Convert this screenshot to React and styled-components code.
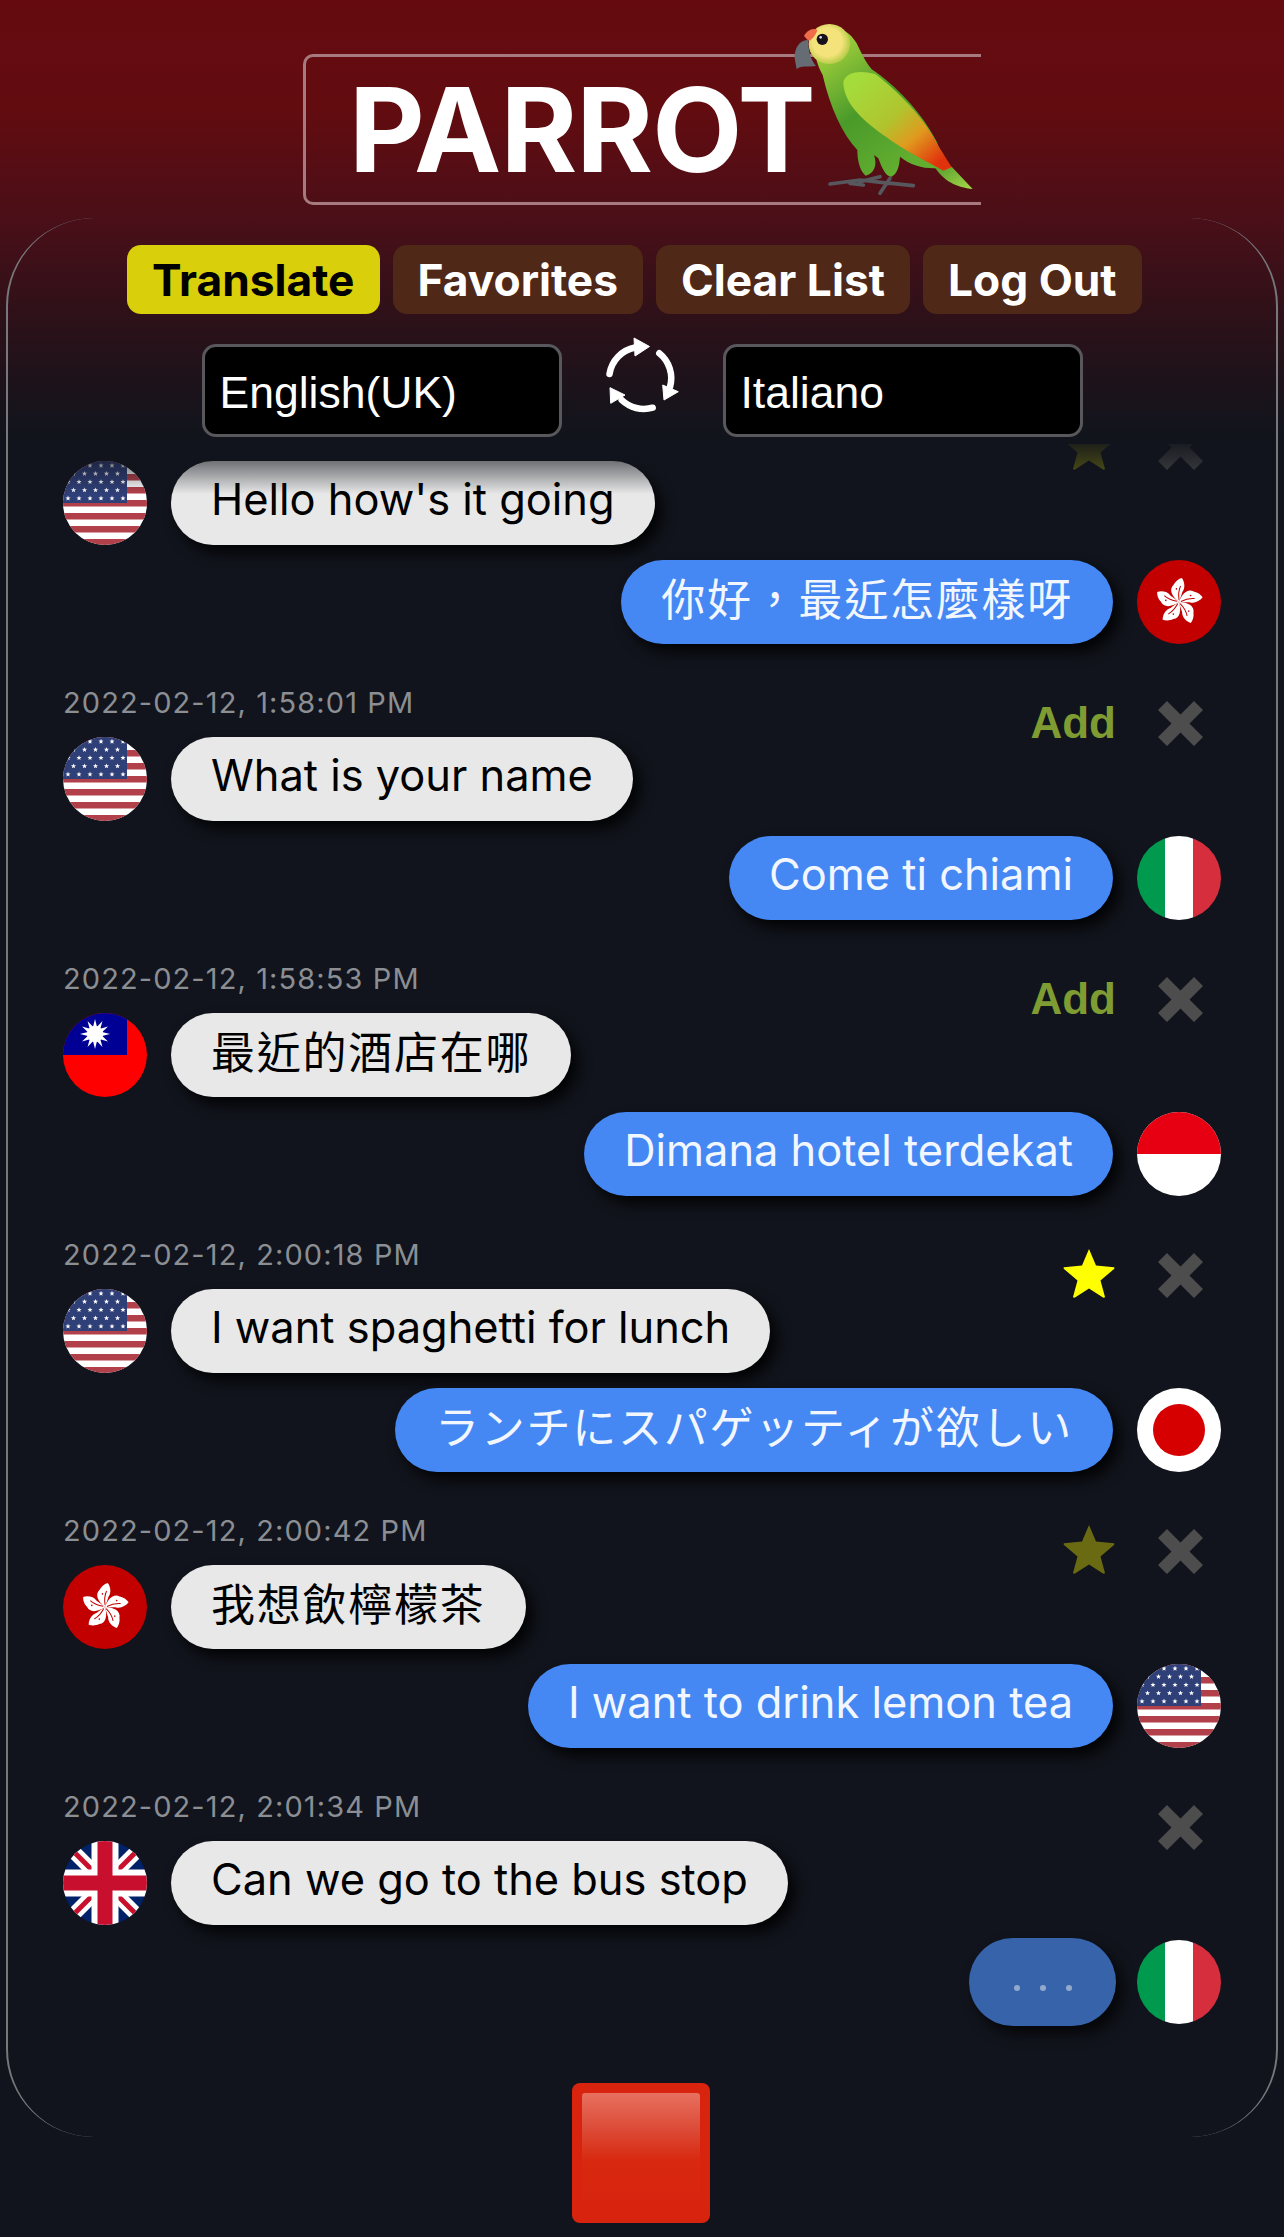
import React from 'react';
import styled, { createGlobalStyle } from 'styled-components';

const bg = `#11141c`;
const sans = `Inter, "Noto Sans CJK TC", sans-serif`;

const GlobalStyle = createGlobalStyle`
    html, body {
        margin: 0;
        padding: 0;
        background: ${bg};
    }
    * { box-sizing: border-box; }
`;

const Page = styled.div`
    width: 1284px;
    height: 2237px;
    overflow: hidden;
    padding-top: 54px;
    font-family: ${sans};
    background: linear-gradient(#650b10 0, #620c10 110px, #4a0f18 220px, #2a1119 330px, #13141c 425px, ${bg} 445px);
`;

const TitleBox = styled.div`
    position: relative;
    width: 678px;
    height: 151px;
    margin-left: 303px;
    padding-left: 43px;
    display: flex;
    align-items: center;
    border: 3px solid #a67a7e;
    border-right: none;
    border-radius: 10px 0 0 10px;
`;

const Title = styled.h1`
    margin: 0;
    font-size: 117px;
    font-weight: 700;
    line-height: 1;
    letter-spacing: -1px;
    color: #fff;
`;

const ParrotArt = styled.svg`
    position: absolute;
    left: 474px;
    top: -47px;
    width: 200px;
    height: 190px;
`;

const Panel = styled.main`
    width: 1272px;
    height: 1919px;
    margin: 13px 0 0 6px;
    display: flex;
    flex-direction: column;
    border-left: 2px solid #77777c;
    border-right: 2px solid #77777c;
    border-radius: 88px;
`;

const Tabs = styled.nav`
    display: flex;
    gap: 13px;
    padding: 27px 0 0 119px;
`;

const Tab = styled.button`
    height: 69px;
    padding: 0 25px;
    border: none;
    border-radius: 14px;
    font-family: ${sans};
    font-size: 44.3px;
    font-weight: 700;
    background: ${props => props.$active ? `#d9cf0a` : `#4f2817`};
    color: ${props => props.$active ? `#000` : `#fff`};
`;

const LangRow = styled.div`
    display: flex;
    justify-content: center;
    gap: 28px;
    margin-top: 30px;
    height: 93px;
`;

const LangSelect = styled.div`
    width: 360px;
    height: 93px;
    padding: 5px 0 0 15px;
    display: flex;
    align-items: center;
    background: #000;
    border: 3px solid #57575c;
    border-radius: 14px;
    font-family: "Liberation Sans", Arial, sans-serif;
    font-size: 44.5px;
    color: #fff;
`;

const SwapIcon = styled.svg`
    flex: none;
    width: 105px;
    height: 100px;
    margin-top: -19px;
`;

const List = styled.section`
    position: relative;
    flex: 1;
    overflow: hidden;
    margin-top: 7px;
    padding: 0 55px;
`;

const ListFade = styled.div`
    position: absolute;
    z-index: 2;
    left: 0;
    right: 0;
    top: 0;
    height: 50px;
    background: linear-gradient(rgba(17, 20, 28, 0.85), rgba(17, 20, 28, 0));
`;

const ListInner = styled.div`
    margin-top: -76px;
`;

const Group = styled.article`
    display: flex;
    flex-direction: column;
`;

const Meta = styled.div`
    height: 93px;
    display: flex;
    align-items: flex-end;
    justify-content: space-between;
`;

const Timestamp = styled.time`
    margin-bottom: 16px;
    font-size: 29px;
    line-height: 36px;
    letter-spacing: 1.1px;
    color: #8b8e93;
`;

const Actions = styled.div`
    position: relative;
    z-index: 1;
    display: flex;
    align-items: center;
    gap: 21px;
    height: 50px;
    margin-bottom: -11px;
    padding-right: 18px;
`;

const AddLabel = styled.span`
    margin-right: -1px;
    font-family: "Liberation Sans", Arial, sans-serif;
    font-size: 44px;
    font-weight: 700;
    color: #7f9c33;
`;

const StarIcon = styled.svg`
    width: 52px;
    height: 50px;
    margin-bottom: 5px;
    fill: ${props => props.$on ? `#ffff00` : `#6a6a12`};
`;

const CloseIcon = styled.svg`
    width: 45px;
    height: 45px;
    margin-left: 22px;
    fill: #4d4d4d;
`;

const Row = styled.div`
    display: flex;
    align-items: center;
    gap: 24px;
    justify-content: ${props => props.$right ? `flex-end` : `flex-start`};
    margin-top: ${props => props.$right ? `15px` : `0`};
`;

const Bubble = styled.div`
    height: 84px;
    padding: 0 40px;
    border-radius: 42px;
    font-size: ${props => props.$cjk ? `44px` : `43.4px`};
    line-height: ${props => props.$cjk ? `81px` : `77px`};
    letter-spacing: ${props => props.$cjk ? `1.76px` : `0`};
    white-space: nowrap;
    background: ${props => props.$right ? `#4587f3` : `#e8e8e8`};
    color: ${props => props.$right ? `#f2f7ff` : `#000`};
    box-shadow: 7px 8px 14px rgba(0, 0, 0, 0.85);
`;

const TypingBubble = styled.div`
    width: 147px;
    height: 88px;
    margin: -2px -3px -2px 0;
    padding-top: 11px;
    display: flex;
    align-items: center;
    justify-content: center;
    gap: 20px;
    border-radius: 44px;
    background: #3763ab;
    box-shadow: 7px 8px 14px rgba(0, 0, 0, 0.7);
`;

const TypingDot = styled.span`
    width: 6px;
    height: 6px;
    border-radius: 50%;
    background: #93a9cc;
`;

const FlagFrame = styled.svg`
    flex: none;
    width: 84px;
    height: 84px;
    border-radius: 50%;
`;

const StopButton = styled.div`
    width: 138px;
    height: 140px;
    margin: -54px 0 0 572px;
    padding: 10px 10px 12px;
    border-radius: 8px;
    background: #d8240f;
`;

const StopGloss = styled.div`
    height: 100%;
    border-radius: 3px;
    background: linear-gradient(#e8705f, #dc4c38 30%, #d8280f 58%, #d8240f);
`;

const starPoints = (cx, cy, r) => {
    const pts = [];
    for (let i = 0; i < 10; i++) {
        const rad = i % 2 === 0 ? r : r * 0.42;
        const a = (Math.PI / 5) * i;
        pts.push(`${(cx + rad * Math.sin(a)).toFixed(2)},${(cy - rad * Math.cos(a)).toFixed(2)}`);
    }
    return pts.join(' ');
};

const USFlag = () => {
    const stars = [];
    for (let r = 0; r < 5; r++) {
        const n = r % 2 === 0 ? 6 : 5;
        for (let c = 0; c < n; c++) {
            stars.push(starPoints((r % 2 === 0 ? 5 : 10.5) + c * 11, 4.5 + r * 8.2, 2.7));
        }
    }
    return (
        <FlagFrame viewBox="0 0 84 84">
            <rect width="84" height="84" fill="#fff" />
            {[0, 13, 26, 39, 52, 65, 78].map(y => <rect key={y} y={y} width="84" height="6.5" fill="#b2404a" />)}
            <rect width="64" height="42" fill="#2f3f78" />
            {stars.map((p, i) => <polygon key={i} points={p} fill="#fff" />)}
        </FlagFrame>
    );
};

const HKFlag = () => (
    <FlagFrame viewBox="0 0 84 84">
        <rect width="84" height="84" fill="#c20000" />
        {[0, 1, 2, 3, 4].map(i => (
            <g key={i} transform={`rotate(${2 + i * 72} 42 42)`}>
                <path d="M42 42C35 37 31 30 36 25C38 21 41 19 44 18C47 22 48 28 45 32C44 36 43 39 42 42Z" fill="#fff" />
                <path d="M42 40C41 35 41 31 43 26" stroke="#c20000" strokeWidth="1" fill="none" />
                <circle cx="39" cy="29" r="0.8" fill="#c20000" />
            </g>
        ))}
    </FlagFrame>
);

const ITFlag = () => (
    <FlagFrame viewBox="0 0 84 84">
        <rect width="28" height="84" fill="#009a4e" />
        <rect x="28" width="28" height="84" fill="#fff" />
        <rect x="56" width="28" height="84" fill="#d62e3c" />
    </FlagFrame>
);

const IDFlag = () => (
    <FlagFrame viewBox="0 0 84 84">
        <rect width="84" height="84" fill="#fff" />
        <rect width="84" height="42" fill="#e70011" />
    </FlagFrame>
);

const JPFlag = () => (
    <FlagFrame viewBox="0 0 84 84">
        <rect width="84" height="84" fill="#fff" />
        <circle cx="42" cy="42" r="26" fill="#d60000" />
    </FlagFrame>
);

const TWFlag = () => (
    <FlagFrame viewBox="0 0 84 84">
        <rect width="84" height="84" fill="#fe0000" />
        <rect width="64" height="42" fill="#000095" />
        {Array.from({ length: 12 }, (_, i) => (
            <polygon key={i} points="32,6 34,14 30,14" fill="#fff" transform={`rotate(${i * 30} 32 21)`} />
        ))}
        <circle cx="32" cy="21" r="8" fill="#fff" />
    </FlagFrame>
);

const UKFlag = () => (
    <FlagFrame viewBox="0 0 84 84">
        <rect width="84" height="84" fill="#012169" />
        <path d="M0 0L84 84M84 0L0 84" stroke="#fff" strokeWidth="14" />
        <path d="M0 0L84 84M84 0L0 84" stroke="#c8102e" strokeWidth="5" />
        <path d="M42 0V84M0 42H84" stroke="#fff" strokeWidth="27" />
        <path d="M42 0V84M0 42H84" stroke="#c8102e" strokeWidth="15" />
    </FlagFrame>
);

const flags = { us: USFlag, hk: HKFlag, it: ITFlag, id: IDFlag, jp: JPFlag, tw: TWFlag, uk: UKFlag };

const Flag = ({ code }) => {
    const Comp = flags[code];
    return <Comp />;
};

const Star = ({ on }) => (
    <StarIcon $on={on} viewBox="0 0 52 50">
        <path d="M26 1L33 17.500L51 19.200Q52 20 51 21L37.500 32.500L42 49Q41.500 50 40 49.500L26 40.500L12 49.500Q10.500 50 10 49L14.500 32.500L1 21Q0 20 1 19.200L19 17.500Z" />
    </StarIcon>
);

const Close = () => (
    <CloseIcon viewBox="0 0 45 45">
        <path d="M9 0L22.500 13.500L36 0L45 9L31.500 22.500L45 36L36 45L22.500 31.500L9 45L0 36L13.500 22.500L0 9Z" />
    </CloseIcon>
);

const Parrot = () => (
    <ParrotArt viewBox="0 0 600 570">
        <defs>
            <linearGradient id="parrotBody" x1="0.2" y1="0.1" x2="0.7" y2="0.9">
                <stop offset="0" stopColor="#9ccc3a" />
                <stop offset="0.5" stopColor="#4a9a2a" />
                <stop offset="1" stopColor="#62ae30" />
            </linearGradient>
            <linearGradient id="parrotWing" x1="0.1" y1="0.1" x2="0.9" y2="0.9">
                <stop offset="0" stopColor="#a4dc3c" />
                <stop offset="0.45" stopColor="#b0c42e" />
                <stop offset="0.7" stopColor="#e09a1e" />
                <stop offset="1" stopColor="#e0320c" />
            </linearGradient>
            <radialGradient id="parrotHead" cx="0.45" cy="0.45" r="0.6">
                <stop offset="0.6" stopColor="#f4e27a" />
                <stop offset="1" stopColor="#a8c83e" />
            </radialGradient>
            <linearGradient id="parrotTail" x1="0" y1="0" x2="1" y2="1">
                <stop offset="0" stopColor="#4f9a2c" />
                <stop offset="1" stopColor="#a8d848" />
            </linearGradient>
        </defs>
        <path d="M150 522L240 510L330 520M240 515L300 500M250 525L210 520M330 505L300 550M335 520L400 527" stroke="#56585e" strokeWidth="11" strokeLinecap="round" fill="none" />
        <path d="M460 465L515 470L578 537C530 532 490 515 460 465Z" fill="url(#parrotTail)" />
        <path d="M110 70C150 35 205 55 230 100C245 130 255 155 275 178C345 225 420 300 470 395L500 470C460 480 400 475 360 440C358 470 352 490 335 500C315 500 305 470 295 445L282 435C292 462 285 490 257 497C237 480 232 445 232 420C185 370 150 290 128 195C115 170 95 130 110 70Z" fill="url(#parrotBody)" />
        <path d="M190 215C200 185 240 180 285 192C350 240 430 320 470 400L515 472L490 482C440 455 370 420 320 382C260 340 190 285 190 215Z" fill="url(#parrotWing)" />
        <ellipse cx="148" cy="102" rx="62" ry="60" fill="url(#parrotHead)" />
        <path d="M72 78C80 62 98 52 112 60C108 75 95 92 85 92Z" fill="#ee6c4a" />
        <path d="M85 90C60 88 42 115 44 145L50 178C60 165 85 172 108 168C92 150 84 120 85 90Z" fill="#666c74" />
        <circle cx="127" cy="88" r="17" fill="#15101c" />
        <circle cx="122" cy="82" r="4" fill="#d8d8e0" />
    </ParrotArt>
);

const Swap = () => (
    <SwapIcon viewBox="0 0 105 100">
        <g fill="none" stroke="#fff" strokeWidth="6.5" strokeLinecap="round">
            <path d="M19.500 49A32 32 0 0 1 45 22.500" />
            <path d="M69.300 28.300A32 32 0 0 1 80 62" />
            <path d="M62.700 82.700A32 32 0 0 1 31.700 75" />
        </g>
        <g fill="#fff" stroke="#fff" strokeWidth="1" strokeLinejoin="round">
            <polygon points="44,13 59.500,21.500 45,31" />
            <polygon points="72.700,60 88.300,66.700 74,75" />
            <polygon points="20,62.700 35,70 20.700,78.300" />
        </g>
    </SwapIcon>
);

const messages = [
    { time: '', action: null, from: 'us', text: `Hello how's it going`, to: 'hk', reply: '你好，最近怎麼樣呀' },
    { time: '2022-02-12, 1:58:01 PM', action: 'add', from: 'us', text: 'What is your name', to: 'it', reply: 'Come ti chiami' },
    { time: '2022-02-12, 1:58:53 PM', action: 'add', from: 'tw', text: '最近的酒店在哪', to: 'id', reply: 'Dimana hotel terdekat' },
    { time: '2022-02-12, 2:00:18 PM', action: 'on', from: 'us', text: 'I want spaghetti for lunch', to: 'jp', reply: 'ランチにスパゲッティが欲しい' },
    { time: '2022-02-12, 2:00:42 PM', action: 'off', from: 'hk', text: '我想飲檸檬茶', to: 'us', reply: 'I want to drink lemon tea' },
    { time: '2022-02-12, 2:01:34 PM', action: null, from: 'uk', text: 'Can we go to the bus stop', to: 'it', reply: null },
];

const isCjk = (text) => /[^\x00-\x7f]/.test(text);

const App = () => (
    <Page>
        <GlobalStyle />
        <TitleBox>
            <Title>PARROT</Title>
            <Parrot />
        </TitleBox>
        <Panel>
            <Tabs>
                <Tab $active>Translate</Tab>
                <Tab>Favorites</Tab>
                <Tab>Clear List</Tab>
                <Tab>Log Out</Tab>
            </Tabs>
            <LangRow>
                <LangSelect>English(UK)</LangSelect>
                <Swap />
                <LangSelect>Italiano</LangSelect>
            </LangRow>
            <List>
                <ListFade />
                <ListInner>
                    {messages.map((m, i) => (
                        <Group key={i}>
                            <Meta>
                                <Timestamp>{m.time}</Timestamp>
                                <Actions>
                                    {m.action === 'add' && <AddLabel>Add</AddLabel>}
                                    {m.action === 'on' && <Star on />}
                                    {(m.action === 'off' || i === 0) && <Star />}
                                    <Close />
                                </Actions>
                            </Meta>
                            <Row>
                                <Flag code={m.from} />
                                <Bubble $cjk={isCjk(m.text)}>{m.text}</Bubble>
                            </Row>
                            <Row $right>
                                {m.reply
                                    ? <Bubble $right $cjk={isCjk(m.reply)}>{m.reply}</Bubble>
                                    : <TypingBubble><TypingDot /><TypingDot /><TypingDot /></TypingBubble>}
                                <Flag code={m.to} />
                            </Row>
                        </Group>
                    ))}
                </ListInner>
            </List>
        </Panel>
        <StopButton>
            <StopGloss />
        </StopButton>
    </Page>
);

export default App;
